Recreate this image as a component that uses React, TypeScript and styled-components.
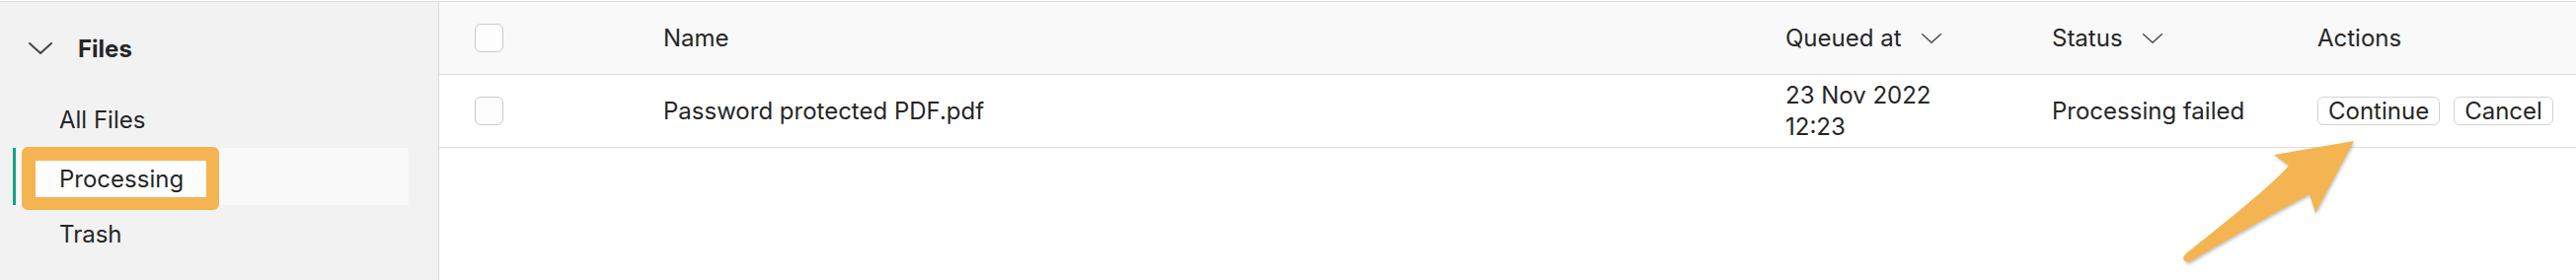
import React from "react";
import styled, { createGlobalStyle } from "styled-components";

const ORANGE = "#f4b452";
const LINE = "#dcdcdc";

const GlobalStyle = createGlobalStyle`
  html, body {
    margin: 0;
    background: #ffffff;
  }
  body {
    padding-top: 1px;
    font-family: Inter, "Noto Sans", "Liberation Sans", sans-serif;
    color: #262626;
  }
  * {
    box-sizing: border-box;
  }
`;

const Chevron = ({ w, h, stroke }: { w: number; h: number; stroke: number }) => (
  <svg width={w} height={h} viewBox={`0 0 ${w} ${h}`} fill="none">
    <polyline
      points={`${stroke / 2},${stroke / 2} ${w / 2},${h - stroke / 2} ${w - stroke / 2},${stroke / 2}`}
      stroke="#454545"
      strokeWidth={stroke}
      strokeLinecap="round"
      strokeLinejoin="round"
    />
  </svg>
);

const navItems = ["All Files", "Processing", "Trash"];
const ACTIVE = "Processing";

export default function App() {
  return (
    <>
      <GlobalStyle />
      <Page>
        <Sidebar>
          <SectionHeader>
            <Chevron w={24} h={12} stroke={2} />
            Files
          </SectionHeader>
          <NavList>
            {navItems.map((item) => (
              <NavItem key={item} $active={item === ACTIVE}>
                {item === ACTIVE ? <Marked>{item}</Marked> : item}
              </NavItem>
            ))}
          </NavList>
        </Sidebar>

        <TableArea>
          <HeaderRow>
            <CheckCell>
              <Checkbox />
            </CheckCell>
            <div>Name</div>
            <SortHeader>
              Queued at
              <Chevron w={20} h={10} stroke={1.4} />
            </SortHeader>
            <SortHeader>
              Status
              <Chevron w={20} h={10} stroke={1.4} />
            </SortHeader>
            <div>Actions</div>
          </HeaderRow>

          <BodyRow>
            <CheckCell>
              <Checkbox />
            </CheckCell>
            <div>Password protected PDF.pdf</div>
            <DateCell>
              <span>23 Nov 2022</span>
              <span>12:23</span>
            </DateCell>
            <div>Processing failed</div>
            <Actions>
              <Button>Continue</Button>
              <Button>Cancel</Button>
            </Actions>
          </BodyRow>
        </TableArea>

        <Arrow width="200" height="150" viewBox="2200 130 200 150">
          <path
            d="M2385 143 L2304 157 L2319 168 Q2298 192 2215 257 Q2208 264 2218 266 Q2282 228 2340 197 L2346 216 Z"
            fill={ORANGE}
          />
        </Arrow>
      </Page>
    </>
  );
}

const Page = styled.div`
  position: relative;
  display: flex;
  height: 283px;
  border-top: 1px solid ${LINE};
  font-size: 24px;
`;

const Sidebar = styled.aside`
  flex-shrink: 0;
  width: 445px;
  background: #f2f2f2;
  border-right: 1px solid ${LINE};
`;

const SectionHeader = styled.div`
  display: flex;
  align-items: center;
  gap: 26px;
  height: 30px;
  margin-top: 32px;
  padding-left: 29px;
  font-weight: 700;
`;

const NavList = styled.nav`
  margin-top: 28px;
`;

const NavItem = styled.div<{ $active?: boolean }>`
  display: flex;
  align-items: center;
  width: 401px;
  height: 58px;
  margin-left: 13px;
  padding-left: ${(p) => (p.$active ? "0" : "47px")};
  background: ${(p) => (p.$active ? "#f9f9f9" : "transparent")};
  border-left: ${(p) => (p.$active ? "3px solid #12a37f" : "none")};
`;

const Marked = styled.span`
  display: inline-block;
  margin: 4px 0 0 6px;
  padding: 4px 23px 4px 24px;
  line-height: 29px;
  background: #fefefe;
  border-style: solid;
  border-color: ${ORANGE};
  border-width: 14px 13px 13px 14px;
  border-radius: 6px;
`;

const TableArea = styled.section`
  flex: 1;
  display: flex;
  flex-direction: column;
`;

const Row = styled.div`
  display: grid;
  grid-template-columns: 227px 1137px 270px 269px 1fr;
  align-items: center;
  height: 74px;
  border-bottom: 1px solid ${LINE};
`;

const HeaderRow = styled(Row)`
  background: #f9f9f9;
`;

const BodyRow = styled(Row)`
  background: #ffffff;
`;

const CheckCell = styled.div`
  padding-left: 36px;
`;

const Checkbox = styled.div`
  width: 29px;
  height: 29px;
  border: 1px solid #c9c9c9;
  border-radius: 6px;
  background: #fdfdfd;
`;

const SortHeader = styled.div`
  display: flex;
  align-items: center;
  gap: 20px;
`;

const DateCell = styled.div`
  display: flex;
  flex-direction: column;
  line-height: 32px;
`;

const Actions = styled.div`
  display: flex;
  gap: 14px;
`;

const Button = styled.button`
  height: 29px;
  padding: 0 10px;
  font: inherit;
  font-size: 24px;
  line-height: 27px;
  color: #262626;
  background: #ffffff;
  border: 1px solid #d3d3d3;
  border-radius: 6px;
`;

const Arrow = styled.svg`
  position: absolute;
  left: 2200px;
  top: 128px;
  overflow: visible;
  filter: drop-shadow(1px 2px 1.5px rgba(0, 0, 0, 0.22));
`;
